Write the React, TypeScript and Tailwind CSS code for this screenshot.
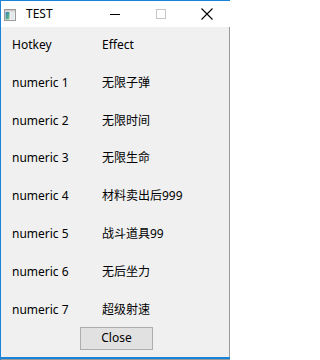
import React from "react";

const rows: [string, string][] = [
  ["numeric 1", "无限子弹"],
  ["numeric 2", "无限时间"],
  ["numeric 3", "无限生命"],
  ["numeric 4", "材料卖出后999"],
  ["numeric 5", "战斗道具99"],
  ["numeric 6", "无后坐力"],
  ["numeric 7", "超级射速"],
];

function AppIcon() {
  return (
    <svg width="12" height="12" viewBox="0 0 12 12" className="block">
      <defs>
        <linearGradient id="g1" x1="0" y1="0" x2="1" y2="1">
          <stop offset="0" stopColor="#3b7fb8" />
          <stop offset="0.5" stopColor="#4aa39a" />
          <stop offset="1" stopColor="#8cc88a" />
        </linearGradient>
      </defs>
      <rect x="0.5" y="0.5" width="11" height="11" fill="#f4f4f4" stroke="#9a9a9a" />
      <rect x="1" y="1" width="10" height="1.5" fill="#c8c8c8" />
      <rect x="1.5" y="3" width="4" height="7.5" fill="url(#g1)" />
      <rect x="6.5" y="3" width="4" height="7.5" fill="#e4e8ea" />
    </svg>
  );
}

export default function App() {
  const font = {
    fontFamily: '"Noto Sans", "Noto Sans CJK SC", sans-serif',
  };
  return (
    <div
      className="w-[230px] h-[360px] flex flex-col border-l border-t border-[#1883d7] text-[12px] text-black overflow-hidden"
      style={font}
    >
      <div className="h-[26px] bg-white flex items-center shrink-0">
        <div className="ml-[3px] mt-[1px]">
          <AppIcon />
        </div>
        <span className="ml-[10px] leading-[16px]">TEST</span>
        <div className="ml-auto flex items-center h-full">
          <div className="w-[46px] h-full flex items-center justify-center">
            <div className="w-[10px] h-px bg-black mt-[1px]" />
          </div>
          <div className="w-[46px] h-full flex items-center justify-center">
            <div className="w-[10px] h-[10px] border border-[#c6c6c6] mt-[-1px]" />
          </div>
          <div className="w-[46px] h-full flex items-center justify-center">
            <svg width="12" height="12" viewBox="0 0 12 12" className="block mt-[-1px]">
              <path d="M0.5 0.5 L11.5 11.5 M11.5 0.5 L0.5 11.5" stroke="#000" strokeWidth="1.1" />
            </svg>
          </div>
        </div>
      </div>
      <div className="flex-1 bg-[#f0f0f0] border-r border-[#9a9a9a] flex flex-col">
        <div className="flex flex-col pt-[10px] gap-[21.8px]">
          <div className="flex h-[16px] items-center leading-[16px]">
            <span className="w-[101px] pl-[11px]">Hotkey</span>
            <span>Effect</span>
          </div>
          {rows.map(([k, v]) => (
            <div key={k} className="flex h-[16px] items-center leading-[16px]">
              <span className="w-[101px] pl-[11px]">{k}</span>
              <span>{v}</span>
            </div>
          ))}
        </div>
        <div className="flex mt-[9px] pl-[79px]">
          <button className="w-[73px] h-[23px] bg-[#e1e1e1] border border-[#adadad] leading-[16px]">
            Close
          </button>
        </div>
      </div>
      <div className="h-[2px] bg-[#1883d7] shrink-0" />
      <div className="h-px bg-[#9a9a9a] shrink-0" />
    </div>
  );
}
